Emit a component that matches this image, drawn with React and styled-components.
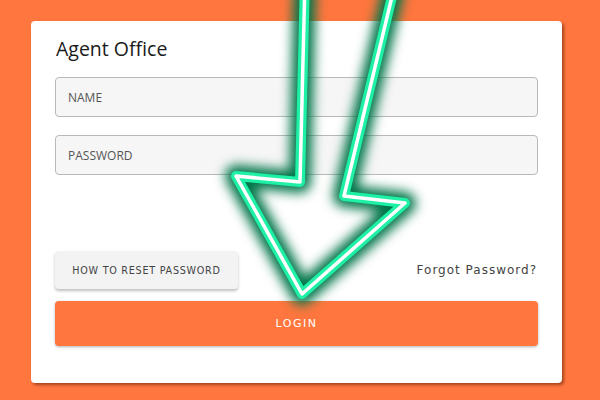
import React from "react";
import styled, { createGlobalStyle } from "styled-components";

const orange = "#ff763e";

const GlobalStyle = createGlobalStyle`
  html, body {
    margin: 0;
    padding: 0;
    background: ${orange};
  }
  body {
    font-family: Lato, "Open Sans", sans-serif;
  }
`;

const Page = styled.div`
  position: relative;
  width: 600px;
  height: 400px;
  overflow: hidden;
  background: ${orange};
  padding-top: 21px;
  box-sizing: border-box;
`;

const Card = styled.div`
  margin-left: 31px;
  width: 531px;
  height: 362px;
  box-sizing: border-box;
  background: #fff;
  border-radius: 4px;
  box-shadow: 2px 2px 3px rgba(90, 30, 0, 0.55);
  padding: 15px 24px 0 24px;
  display: flex;
  flex-direction: column;
`;

const Title = styled.h1`
  margin: 0 0 0 1px;
  font-family: "Open Sans", Lato, sans-serif;
  font-weight: 500;
  font-size: 19.5px;
  line-height: 26px;
  color: #1a1a1a;
`;

const Field = styled.div`
  height: 40px;
  box-sizing: border-box;
  margin-top: ${(p) => p.$top}px;
  border: 1px solid #b9b9b9;
  border-radius: 4px;
  background: #f6f6f6;
  display: flex;
  align-items: center;
  padding-left: 12px;
  font-family: "Open Sans", sans-serif;
  font-size: 12px;
  color: #555;
`;

const Actions = styled.div`
  margin-top: 76px;
  height: 38px;
  display: flex;
  justify-content: space-between;
  align-items: center;
`;

const ResetButton = styled.button`
  width: 183px;
  height: 38px;
  border: none;
  border-radius: 4px;
  background: #f3f3f3;
  box-shadow: 0 2px 3px rgba(0, 0, 0, 0.25);
  font-family: "DejaVu Sans", sans-serif;
  font-size: 9.6px;
  letter-spacing: 0.75px;
  color: #444;
  padding: 0;
`;

const Forgot = styled.span`
  font-family: "DejaVu Sans", sans-serif;
  font-size: 12px;
  letter-spacing: 1px;
  color: #444;
  margin-right: 1px;
`;

const LoginButton = styled.button`
  margin-top: 12px;
  height: 45px;
  border: none;
  border-radius: 4px;
  background: ${orange};
  box-shadow: 0 1px 3px rgba(0, 0, 0, 0.3);
  font-family: "DejaVu Sans", sans-serif;
  font-size: 11px;
  letter-spacing: 1.5px;
  color: #fff;
`;

const Overlay = styled.svg`
  position: absolute;
  left: 0;
  top: 0;
  pointer-events: none;
`;

const arrow =
  "M305 -20 L300 182 L236 176 L302 294 L405 203 L344 196 L396 -20";

const NeonArrow = () => (
  <Overlay width="600" height="400" viewBox="0 0 600 400">
    <defs>
      <filter id="glow" x="-30%" y="-30%" width="160%" height="160%">
        <feGaussianBlur stdDeviation="6" />
      </filter>
    </defs>
    <path
      d={arrow}
      fill="none"
      stroke="#06744a"
      strokeWidth="22"
      strokeLinejoin="round"
      filter="url(#glow)"
    />
    <path
      d={arrow}
      fill="none"
      stroke="#1ef0a6"
      strokeWidth="10"
      strokeLinejoin="round"
    />
    <path
      d={arrow}
      fill="none"
      stroke="#ffffff"
      strokeWidth="3.5"
      strokeLinejoin="round"
    />
  </Overlay>
);

export default function App() {
  return (
    <Page>
      <GlobalStyle />
      <Card>
        <Title>Agent Office</Title>
        <Field $top={15}>NAME</Field>
        <Field $top={18}>PASSWORD</Field>
        <Actions>
          <ResetButton>HOW TO RESET PASSWORD</ResetButton>
          <Forgot>Forgot Password?</Forgot>
        </Actions>
        <LoginButton>LOGIN</LoginButton>
      </Card>
      <NeonArrow />
    </Page>
  );
}
